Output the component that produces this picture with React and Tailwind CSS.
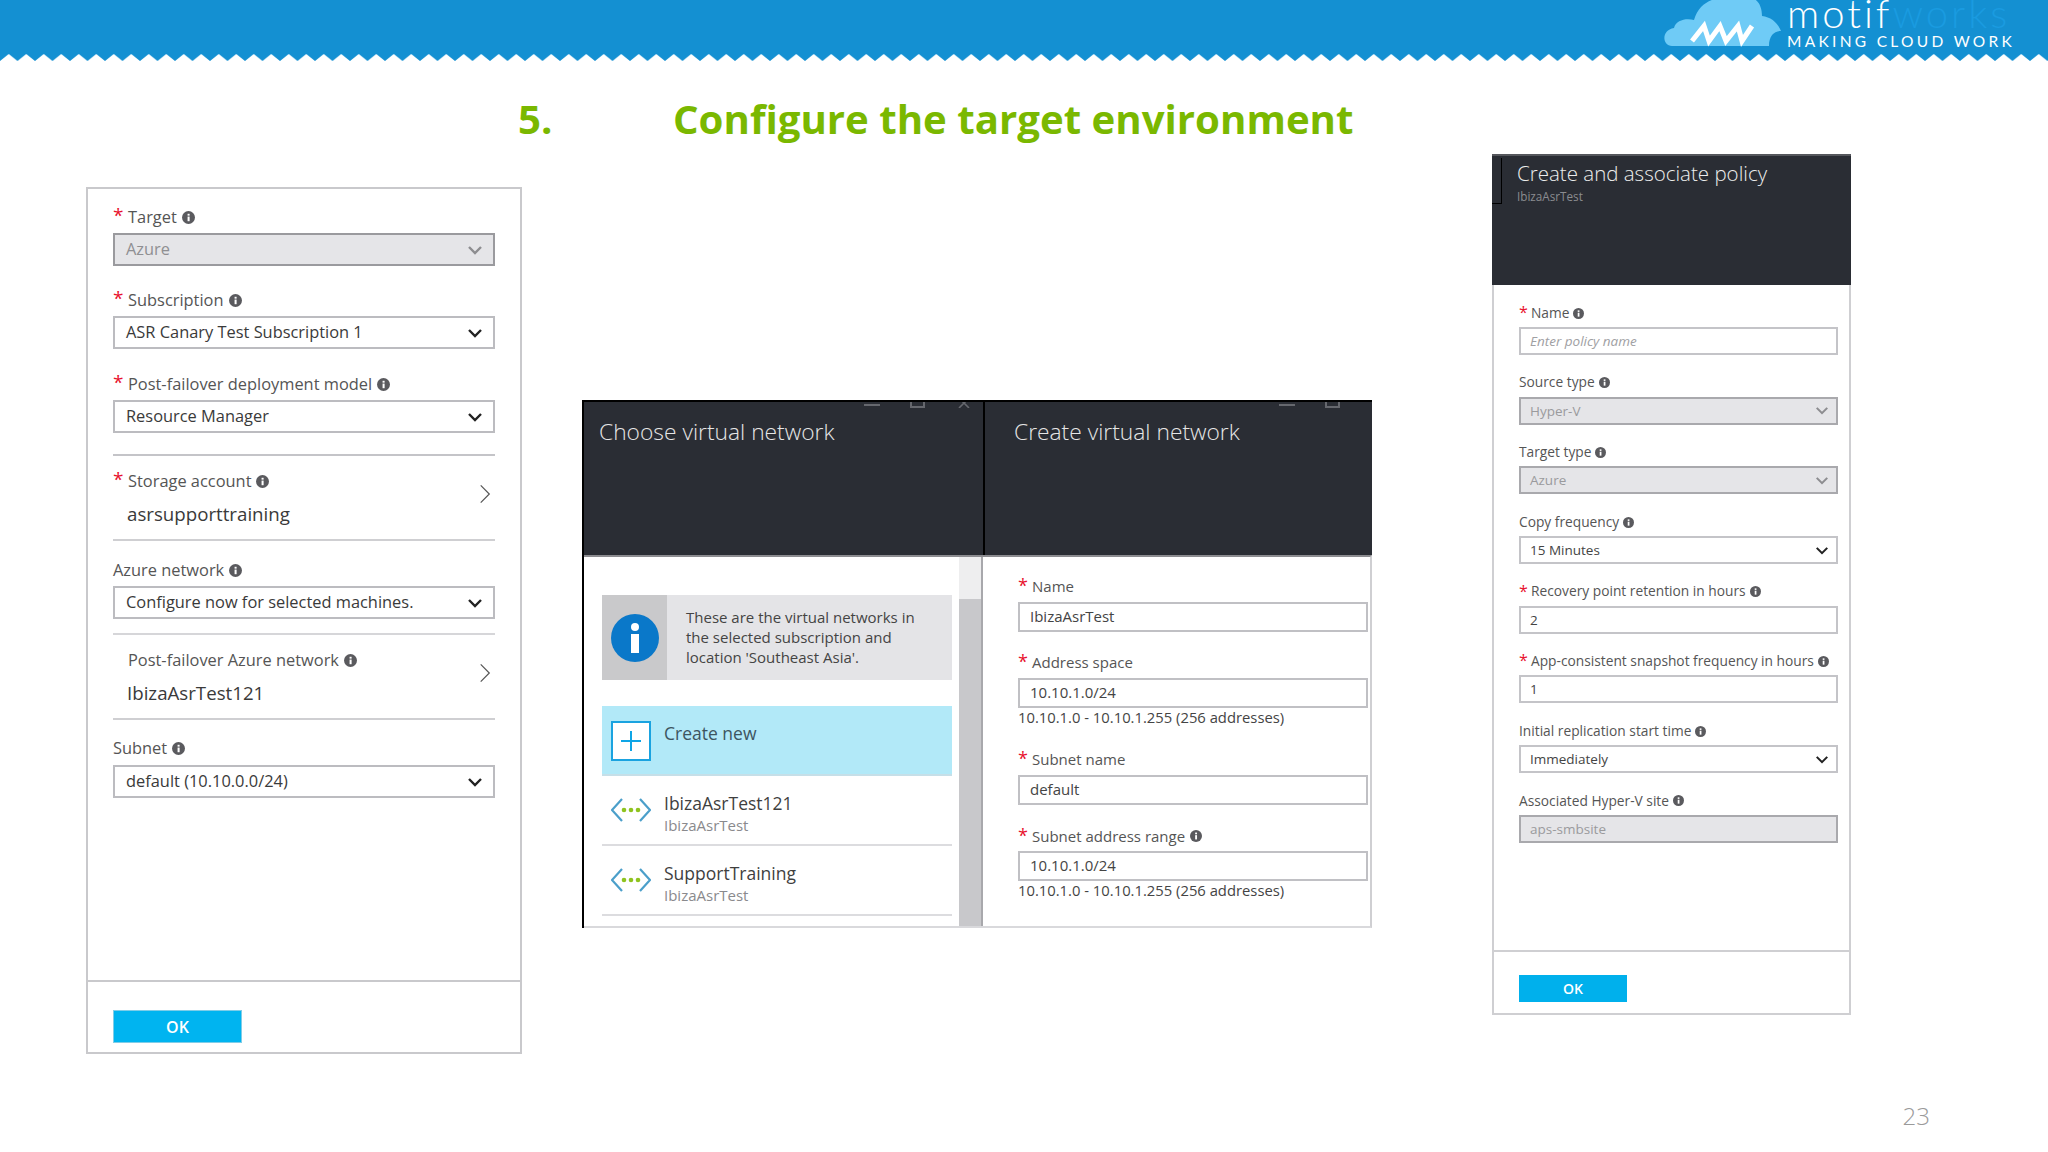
import React from "react";

const Info = ({ className = "w-[13px] h-[13px]" }) => (
  <svg viewBox="0 0 14 14" className={`${className} shrink-0`}>
    <circle cx="7" cy="7" r="7" fill="#5a5a5e" />
    <rect x="6" y="6" width="2.2" height="5" fill="#fff" />
    <rect x="6" y="3" width="2.2" height="2" fill="#fff" />
  </svg>
);

const Chevron = ({ dim, className = "w-[16px] h-[10px]" }) => (
  <svg viewBox="0 0 16 10" className={className}>
    <polyline points="2,2 8,8 14,2" fill="none" stroke={dim ? "#8d8d90" : "#222"} strokeWidth="2.4" />
  </svg>
);

const ArrowRight = () => (
  <svg viewBox="0 0 14 22" className="w-[12px] h-[20px] mb-[8px] shrink-0">
    <polyline points="2,1 12,11 2,21" fill="none" stroke="#555" strokeWidth="1.4" />
  </svg>
);

// big form on the left
const BigLabel = ({ star, info, children, indent }) => (
  <div className={`flex items-center h-[24px] text-[16.4px] text-[#555] ${indent ? "pl-[15px]" : ""}`}>
    {star && <span className="w-[15px] text-[#e8112d] text-[19px] leading-[16px] h-[20px]">*</span>}
    <span>{children}</span>
    {info !== false && <Info className="w-[13px] h-[13px] ml-[5px]" />}
  </div>
);

const BigSelect = ({ value, disabled, className = "" }) => (
  <div
    className={`flex items-center justify-between h-[33px] px-[11px] text-[16.4px] border-2 ${
      disabled ? "bg-[#e5e5e8] border-[#9a9a9e] text-[#8f8f92]" : "bg-white border-[#bcbcc0] text-[#3a3a3a]"
    } ${className}`}
  >
    <span>{value}</span>
    <Chevron dim={disabled} className="w-[16px] h-[10px] mr-[-1px]" />
  </div>
);

const LinkRow = ({ star, label, value }) => (
  <div className="flex items-center justify-between h-[85px] pr-[4px] border-b-2 border-[#cfcfd2]">
    <div>
      <BigLabel star={star} indent={!star}>{label}</BigLabel>
      <div className="pl-[14px] mt-[9px] text-[18.7px] leading-[24px] text-[#3a3a3a]">{value}</div>
    </div>
    <ArrowRight />
  </div>
);

const LeftPanel = () => (
  <div className="flex flex-col w-[436px] h-[867px] mt-[33px] border-2 border-[#c9c9cc] bg-white">
    <div className="flex-1 px-[25px] pt-[16px]">
      <BigLabel star>Target</BigLabel>
      <BigSelect value="Azure" disabled className="mt-[4px] mb-[22px]" />
      <BigLabel star>Subscription</BigLabel>
      <BigSelect value="ASR Canary Test Subscription 1" className="mt-[4px] mb-[23px]" />
      <BigLabel star>Post-failover deployment model</BigLabel>
      <BigSelect value="Resource Manager" className="mt-[4px] mb-[21px]" />
      <div className="border-t-2 border-[#c4c4c8]" />
      <LinkRow star label="Storage account" value="asrsupporttraining" />
      <div className="pt-[17px]">
        <BigLabel>Azure network</BigLabel>
        <BigSelect value="Configure now for selected machines." className="mt-[4px] mb-[14px]" />
      </div>
      <div className="border-t-2 border-[#d6d6d9]" />
      <LinkRow label="Post-failover Azure network" value="IbizaAsrTest121" />
      <div className="pt-[16px]">
        <BigLabel>Subnet</BigLabel>
        <BigSelect value="default (10.10.0.0/24)" className="mt-[5px]" />
      </div>
    </div>
    <div className="h-[72px] border-t-2 border-[#c9c9cc] px-[25px] pt-[28px]">
      <div className="flex items-center justify-center w-[129px] h-[33px] bg-[#00b4f0] text-white text-[16px] font-semibold border border-[#7fcde8]">
        OK
      </div>
    </div>
  </div>
);

const DarkHeader = ({ title, className = "", children }) => (
  <div className={`relative h-[153px] bg-[#2a2d34] pt-[14px] overflow-hidden ${className}`}>
    <div className="text-[22.8px] leading-[32px] font-light text-[#e6e6e6]">{title}</div>
    {/* window buttons, mostly cut off by the slide crop */}
    {children}
  </div>
);

const NetIcon = () => (
  <svg viewBox="0 0 40 24" className="w-[40px] h-[24px] shrink-0">
    <polyline points="11,1 1,12 11,23" fill="none" stroke="#4b9fca" strokeWidth="2.2" />
    <polyline points="29,1 39,12 29,23" fill="none" stroke="#4b9fca" strokeWidth="2.2" />
    <circle cx="13" cy="12" r="2.3" fill="#8fc31f" />
    <circle cx="20" cy="12" r="2.3" fill="#8fc31f" />
    <circle cx="27" cy="12" r="2.3" fill="#8fc31f" />
  </svg>
);

const NetRow = ({ name }) => (
  <div className="flex items-center h-[70px] pl-[9px] border-b-2 border-[#dcdcdf]">
    <NetIcon />
    <div className="ml-[13px] mt-[6px]">
      <div className="text-[17.5px] leading-[24px] text-[#3f3f3f]">{name}</div>
      <div className="text-[15px] leading-[21px] text-[#8a8a8d]">IbizaAsrTest</div>
    </div>
  </div>
);

const ChooseBlade = () => (
  <div className="flex flex-col w-[401px] border-t-2 border-l-2 border-black">
    <DarkHeader title="Choose virtual network" className="pl-[15px]">
      <div className="absolute top-0 right-[103px] w-[16px] h-[4px] border-b-2 border-[#66686e]" />
      <div className="absolute top-[-6px] right-[58px] w-[15px] h-[12px] border-2 border-[#66686e]" />
      <svg viewBox="0 0 14 6" className="absolute top-0 right-[12px] w-[14px] h-[6px]">
        <path d="M2 -4L12 6M12 -4L2 6" stroke="#66686e" strokeWidth="1.6" />
      </svg>
    </DarkHeader>
    <div className="flex h-[373px] border-t-2 border-[#8c8c90] border-b-2 border-b-[#d9d9dc]">
      <div className="w-[375px] pl-[18px] pr-[7px] bg-white">
        <div className="flex h-[85px] mt-[38px] bg-[#e4e4e7]">
          <div className="flex items-center justify-center w-[65px] bg-[#c9c9cb]">
            <svg viewBox="0 0 48 48" className="w-[48px] h-[48px]">
              <circle cx="24" cy="24" r="24" fill="#0a78c9" />
              <circle cx="24" cy="13" r="4" fill="#fff" />
              <rect x="20" y="20" width="8" height="19" fill="#fff" />
            </svg>
          </div>
          <div className="pl-[19px] pt-[12px] text-[15px] leading-[20px] text-[#444]">
            These are the virtual networks in<br />the selected subscription and<br />location 'Southeast Asia'.
          </div>
        </div>
        <div className="flex h-[70px] mt-[26px] pl-[9px] pt-[15px] bg-[#b2e9f8] border-b-2 border-[#c6dfe8]">
          <div className="flex items-center justify-center w-[40px] h-[40px] bg-white border-2 border-[#1aa3e0]">
            <svg viewBox="0 0 20 20" className="w-[20px] h-[20px]">
              <path d="M10 0V20M0 10H20" stroke="#0ea5e6" strokeWidth="2" />
            </svg>
          </div>
          <div className="ml-[13px] text-[17.5px] leading-[24px] text-[#3d5560]">Create new</div>
        </div>
        <NetRow name="IbizaAsrTest121" />
        <NetRow name="SupportTraining" />
      </div>
      <div className="flex flex-col w-[22px] bg-[#eeeeef]">
        <div className="h-[42px]" />
        <div className="flex-1 bg-[#c8c8cb]" />
      </div>
      <div className="w-[2px] bg-[#a8a8ac]" />
    </div>
  </div>
);

const MidLabel = ({ info, children, className = "" }) => (
  <div className={`flex items-center h-[24px] text-[15px] text-[#555] ${className}`}>
    <span className="w-[14px] text-[#e8112d] text-[18px] leading-[16px] h-[19px]">*</span>
    <span>{children}</span>
    {info && <Info className="w-[12px] h-[12px] ml-[5px]" />}
  </div>
);

const MidInput = ({ value, className = "" }) => (
  <div className={`flex items-center h-[30px] pl-[10px] pb-[2px] text-[15px] text-[#444] border-2 border-[#c0c0c4] bg-white ${className}`}>
    {value}
  </div>
);

const MidHint = ({ children }) => <div className="h-[18px] text-[14.8px] leading-[18px] text-[#444]">{children}</div>;

const CreateBlade = () => (
  <div className="flex flex-col w-[389px] border-t-2 border-black">
    <DarkHeader title="Create virtual network" className="pl-[29px] border-l-2 border-black">
      <div className="absolute top-0 right-[77px] w-[16px] h-[4px] border-b-2 border-[#66686e]" />
      <div className="absolute top-[-6px] right-[32px] w-[15px] h-[12px] border-2 border-[#66686e]" />
    </DarkHeader>
    <div className="h-[373px] pl-[35px] pr-[2px] pt-[17px] border-t-2 border-[#8c8c90] border-r-2 border-r-[#cfcfd2] border-b-2 border-b-[#d9d9dc] bg-white">
      <MidLabel>Name</MidLabel>
      <MidInput value="IbizaAsrTest" className="mt-[4px]" />
      <MidLabel className="mt-[18px]">Address space</MidLabel>
      <MidInput value="10.10.1.0/24" className="mt-[4px]" />
      <MidHint>10.10.1.0 - 10.10.1.255 (256 addresses)</MidHint>
      <MidLabel className="mt-[21px]">Subnet name</MidLabel>
      <MidInput value="default" className="mt-[4px]" />
      <MidLabel info className="mt-[19px]">Subnet address range</MidLabel>
      <MidInput value="10.10.1.0/24" className="mt-[3px]" />
      <MidHint>10.10.1.0 - 10.10.1.255 (256 addresses)</MidHint>
    </div>
  </div>
);

const SmallLabel = ({ star, children }) => (
  <div className="flex items-center h-[20px] text-[13.75px] text-[#555]">
    {star && <span className="w-[12px] text-[#e8112d] text-[16px] leading-[14px] h-[16px]">*</span>}
    <span>{children}</span>
    <Info className="w-[11px] h-[11px] ml-[4px]" />
  </div>
);

const SmallBox = ({ value, disabled, select, placeholder }) => {
  let tone = "bg-white border-[#c4c4c8] text-[#444]";
  if (disabled) tone = "bg-[#e5e5e8] border-[#a9a9ad] text-[#9a9a9d]";
  if (placeholder) tone = "bg-white border-[#c4c4c8] text-[#a0a0a3] italic";
  return (
    <div className={`flex items-center justify-between h-[28px] mt-[4px] pl-[9px] pr-[7px] text-[13.5px] border-2 ${tone}`}>
      <span>{value}</span>
      {select && <Chevron dim={disabled} className="w-[14px] h-[9px]" />}
    </div>
  );
};

const SmallField = ({ star, label, ...rest }) => (
  <div>
    <SmallLabel star={star}>{label}</SmallLabel>
    <SmallBox {...rest} />
  </div>
);

const PolicyPanel = () => (
  <div className="flex flex-col w-[359px] h-[861px] ml-[120px]">
    <div className="relative h-[131px] pl-[25px] pt-[2px] bg-[#2a2d34] border-t-2 border-[#55575c]">
      <div className="text-[20.5px] leading-[30px] font-light text-[#ededed]">Create and associate policy</div>
      <div className="text-[11.7px] leading-[14px] mt-[1px] text-[#8a8c90]">IbizaAsrTest</div>
      <div className="absolute left-0 top-[2px] w-[10px] h-[46px] border-r border-b border-black" />
    </div>
    <div className="flex-1 flex flex-col gap-[17.7px] pl-[25px] pr-[11px] pt-[18px] border-x-2 border-[#cfcfd2]">
      <SmallField star label="Name" value="Enter policy name" placeholder />
      <SmallField label="Source type" value="Hyper-V" disabled select />
      <SmallField label="Target type" value="Azure" disabled select />
      <SmallField label="Copy frequency" value="15 Minutes" select />
      <SmallField star label="Recovery point retention in hours" value="2" />
      <SmallField star label="App-consistent snapshot frequency in hours" value="1" />
      <SmallField label="Initial replication start time" value="Immediately" select />
      <SmallField label="Associated Hyper-V site" value="aps-smbsite" disabled />
    </div>
    <div className="h-[65px] pl-[25px] pt-[23px] border-2 border-[#cfcfd2]">
      <div className="flex items-center justify-center w-[108px] h-[27px] bg-[#00b0ec] text-white text-[14px] font-semibold">OK</div>
    </div>
  </div>
);

const Logo = () => (
  <div className="flex items-start pr-[36px] overflow-hidden">
    <svg viewBox="0 0 117 47" className="w-[117px] h-[47px] mr-[6px]">
      <path d="M8 46C-2 46-3 30 10 28C12 20 22 18 30 20C34 6 44 0 55-2H88C95 0 98 8 98 16C107 17 114 23 117 31C110 31 105 36 105 46Z" fill="#6fcbf6" />
      <polyline points="28,41 40,26 45,41 56,26 62,41 74,26 78,41 88,26" fill="none" stroke="#fff" strokeWidth="5" />
    </svg>
    <div className="w-[225px] font-['Lato',sans-serif]">
      <div className="mt-[-7px] h-[41px] text-[40px] leading-[40px] tracking-[3px] font-light text-white whitespace-nowrap">
        motif<span className="text-[#1a9be0]">works</span>
      </div>
      <div className="text-[15.5px] leading-[14px] tracking-[3.3px] text-white whitespace-nowrap">MAKING CLOUD WORK</div>
    </div>
  </div>
);

export default function App() {
  return (
    <div className="w-[2048px] h-[1152px] bg-white overflow-hidden font-['Open_Sans',sans-serif]">
      <div className="flex justify-end h-[54px] bg-[#1490d2] overflow-hidden">
        <Logo />
      </div>
      <svg className="block w-full h-[7px]">
        <defs>
          <pattern id="teeth" width="17.5" height="7" patternUnits="userSpaceOnUse">
            <path d="M0 0H17.5V7L8.75 0L0 7Z" fill="#1490d2" />
          </pattern>
        </defs>
        <rect width="100%" height="7" fill="url(#teeth)" />
      </svg>

      <div className="flex items-center h-[93px] pl-[518px] pt-[24px] text-[40.2px] font-bold text-[#7ab800]">
        <span className="w-[155px]">5.</span>
        <span>Configure the target environment</span>
      </div>

      <div className="flex items-start pl-[86px]">
        <LeftPanel />
        <div className="flex mt-[246px] ml-[60px]">
          <ChooseBlade />
          <CreateBlade />
        </div>
        <PolicyPanel />
      </div>

      <div className="flex justify-end pr-[118px] mt-[47px] text-[24px] leading-[30px] font-light text-[#9a9a9a]">23</div>
    </div>
  );
}
